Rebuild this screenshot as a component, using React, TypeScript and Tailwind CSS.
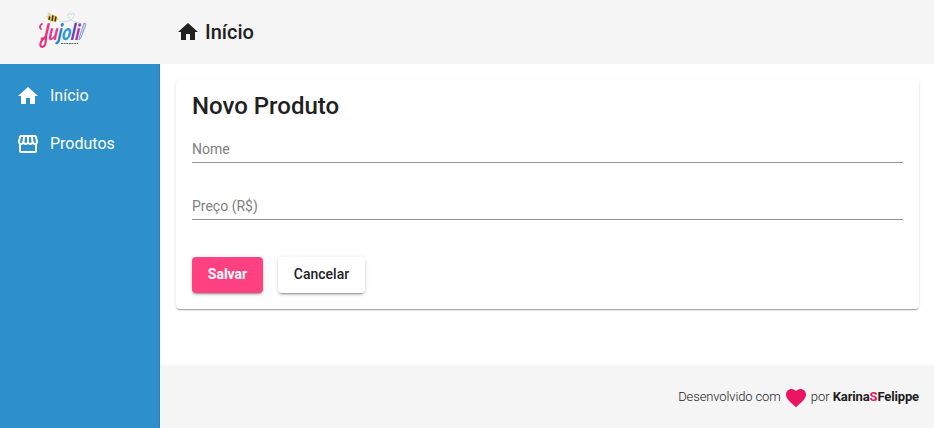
import React from "react";
import { MdHome, MdFavorite } from "react-icons/md";

function Logo() {
  return (
    <svg width="50" height="40" viewBox="0 0 50 40" className="overflow-visible">
      <g transform="translate(3 31) skewX(-8)">
        <text x="0" y="0" fontFamily="'Lato', sans-serif" fontStyle="italic" fontWeight="900" fontSize="23" textLength="38" lengthAdjust="spacingAndGlyphs">
          <tspan fill="#ec2f7d">J</tspan><tspan fill="#e23a92">u</tspan><tspan fill="#2f7cc8">j</tspan><tspan fill="#2a9bd8">o</tspan><tspan fill="#6a3fa8">l</tspan><tspan fill="#b02fa5">i</tspan>
        </text>
      </g>
      <path d="M8 28c0 6-1 10-3.500 10S1.500 34 4 31.500" fill="none" stroke="#ec2f7d" strokeWidth="2.200" strokeLinecap="round" />
      <path d="M4 15c-2 1-3 4-1 5" fill="none" stroke="#ec2f7d" strokeWidth="1.800" strokeLinecap="round" />
      <ellipse cx="14.500" cy="9" rx="5.500" ry="3.300" transform="rotate(18 14.500 9)" fill="#f0c93c" />
      <path d="M12 6l-1 5M15 6.500l-1 5.500M18 7.500l-1 5" stroke="#30291a" strokeWidth="1.400" />
      <ellipse cx="11.500" cy="5.500" rx="1.500" ry="2.500" transform="rotate(-35 11.500 5.500)" fill="#d8d5c8" />
      <path d="M21 12c5 2 9 0 12-1-4-3-4-7-1-7 1 0 1 1 1 2 2-4 6-1 0 5l10 4" fill="none" stroke="#b8d3df" strokeWidth=".7" />
      <path d="M46 14l2 1-5 14-2 2 .500-3z" fill="#d7e3f2" stroke="#577cb6" strokeWidth=".7" />
      <path d="M23 34.500h17" stroke="#52725f" strokeWidth="1.200" strokeDasharray="2 .6" />
    </svg>
  );
}

function Storefront() {
  return (
    <svg width="24" height="24" viewBox="0 0 24 24" fill="currentColor">
      <path d="M21.9 8.89l-1.05-4.37c-.22-.9-1-1.52-1.91-1.52H5.05c-.9 0-1.69.63-1.9 1.52L2.1 8.89c-.24 1.02-.02 2.06.62 2.88.08.11.19.19.28.29V19c0 1.1.9 2 2 2h14c1.1 0 2-.9 2-2v-6.94c.09-.09.2-.18.28-.28.64-.82.87-1.87.62-2.89zM18.91 4.99l1.05 4.37c.1.42.01.84-.25 1.17-.14.18-.44.47-.94.47-.61 0-1.14-.49-1.21-1.14L16.98 5l1.93-.01zM13 5h1.96l.54 4.52c.05.39-.07.78-.33 1.07-.22.26-.54.41-.95.41-.67 0-1.22-.59-1.22-1.31V5zM8.49 9.52L9.04 5H11v4.69c0 .72-.55 1.31-1.29 1.31-.34 0-.65-.15-.89-.41a1.42 1.42 0 0 1-.33-1.07zM4.04 9.36L5.05 5h1.97l-.58 4.86c-.08.65-.6 1.14-1.21 1.14-.49 0-.8-.29-.93-.47-.27-.32-.36-.75-.26-1.17zM5 19v-6.03c.08.01.15.03.23.03.87 0 1.66-.36 2.24-.95.6.6 1.4.95 2.31.95.87 0 1.65-.36 2.23-.93.59.57 1.39.93 2.29.93.84 0 1.64-.35 2.24-.95.58.59 1.37.95 2.24.95.08 0 .15-.02.23-.03V19H5z" />
    </svg>
  );
}

export default function App() {
  return (
    <div className="flex h-[428px] w-[934px] flex-col bg-white font-['Roboto',sans-serif] text-[#212121]">
      <header className="flex h-16 shrink-0 bg-[#f5f5f5]">
        <div className="w-40 pt-[9px] pl-[38px]"><Logo /></div>
        <h1 className="flex items-center gap-[5px] pl-4 text-xl font-medium"><MdHome size={24} />Início</h1>
      </header>
      <div className="flex min-h-0 flex-1">
        <nav className="w-40 shrink-0 border-r border-[#2980b4] bg-[#2e90ca] pt-2 text-white">
          <a className="flex h-12 items-center gap-[10px] pl-4 text-base"><MdHome size={24} />Início</a>
          <a className="flex h-12 items-center gap-[10px] pl-4 text-base"><Storefront />Produtos</a>
        </nav>
        <div className="flex flex-1 flex-col">
          <main className="flex-1 pt-4 pr-[15px] pl-4">
            <section className="h-[229px] rounded bg-white px-4 pt-[10px] shadow-[0_2px_1px_-1px_rgba(0,0,0,0.2),0_1px_1px_0_rgba(0,0,0,0.14),0_1px_3px_0_rgba(0,0,0,0.12)]">
              <h2 className="text-2xl font-medium">Novo Produto</h2>
              <div className="mt-[15px] h-[26px] border-b border-[#949494] pt-0.5 text-sm text-[#808080]">Nome</div>
              <div className="mt-[31px] h-[26px] border-b border-[#949494] pt-0.5 text-sm text-[#808080]">Preço (R$)</div>
              <div className="mt-[37px] flex gap-[15px] text-sm font-medium">
                <button className="h-9 w-[71px] rounded bg-[#ff4081] pb-0.5 font-bold text-white shadow-[0_3px_1px_-2px_rgba(0,0,0,0.2),0_2px_2px_0_rgba(0,0,0,0.14),0_1px_5px_0_rgba(0,0,0,0.12)]">Salvar</button>
                <button className="h-9 w-[87px] rounded bg-white pb-0.5 shadow-[0_3px_1px_-2px_rgba(0,0,0,0.2),0_2px_2px_0_rgba(0,0,0,0.14),0_1px_5px_0_rgba(0,0,0,0.12)]">Cancelar</button>
              </div>
            </section>
          </main>
          <footer className="flex h-[63px] items-center justify-end bg-[#f5f5f5] pr-[15px] text-[13px] font-light">
            <span className="tracking-[-0.12px]">Desenvolvido com</span><MdFavorite size={24} className="mr-[3px] ml-[3px] translate-y-px text-[#e91463]" /><span>por <strong className="font-bold tracking-[-0.14px]">Karina<span className="text-[#e91463]">S</span>Felippe</strong></span>
          </footer>
        </div>
      </div>
    </div>
  );
}
